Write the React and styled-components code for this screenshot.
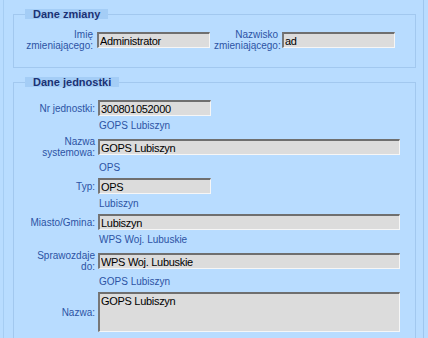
import React from "react";
import styled, { createGlobalStyle } from "styled-components";

const GlobalStyle = createGlobalStyle`
  html, body {
    margin: 0;
    padding: 0;
    background: #b8dcff;
    font-family: "Liberation Sans", Arial, sans-serif;
  }
`;

const Page = styled.div`
  box-sizing: border-box;
  margin-left: 3px;
  width: 421px;
  min-height: 338px;
  border-left: 1px solid #a6cdf3;
  border-right: 1px solid #9fc6ee;
  padding: 9px 7px 0 9px;
  display: flex;
  flex-direction: column;
  gap: 9px;
`;

const Fieldset = styled.fieldset`
  margin: 0;
  padding: ${(p) => p.$pad};
  border: 1px solid #a2c8ef;
  min-width: 0;
`;

const Legend = styled.legend`
  margin-left: 11px;
  padding: 0 8px;
  height: 10px;
  line-height: 10px;
  background: #a4cdf6;
  color: #1b3274;
  font-weight: bold;
  font-size: 11px;
  white-space: nowrap;
`;

const PairRow = styled.div`
  display: flex;
  align-items: center;
  height: 22px;
`;

const Row = styled.div`
  display: flex;
  align-items: center;
  min-height: ${(p) => (p.$tall ? "22px" : "16px")};
`;

const Label = styled.label`
  box-sizing: border-box;
  width: ${(p) => p.$w}px;
  margin-right: ${(p) => p.$gap}px;
  flex: none;
  text-align: right;
  color: #2c53a4;
  font-size: 10px;
  line-height: 11px;
`;

const Input = styled.input`
  box-sizing: border-box;
  flex: none;
  width: ${(p) => p.$w}px;
  height: 16px;
  margin: 0 ${(p) => p.$after || 0}px 0 0;
  padding: 0 1px;
  background: #dcdcdc;
  border-top: 2px solid #6f6f6f;
  border-left: 2px solid #777;
  border-right: 1px solid #f6f6f6;
  border-bottom: 1px solid #f6f6f6;
  font-family: "Liberation Sans", Arial, sans-serif;
  font-size: 11px;
  letter-spacing: -0.3px;
  line-height: 13px;
  color: #000;
  outline: none;
`;

const Area = styled.textarea`
  box-sizing: border-box;
  flex: none;
  width: 302px;
  height: 40px;
  margin: 0;
  padding: 1px 1px;
  resize: none;
  overflow: hidden;
  background: #dcdcdc;
  border-top: 2px solid #6f6f6f;
  border-left: 2px solid #777;
  border-right: 1px solid #f6f6f6;
  border-bottom: 1px solid #f6f6f6;
  font-family: "Liberation Sans", Arial, sans-serif;
  font-size: 11px;
  letter-spacing: -0.3px;
  line-height: 13px;
  color: #000;
  outline: none;
`;

const Desc = styled.div`
  height: 20px;
  line-height: 20px;
  padding-left: 85px;
  color: #2c53a4;
  font-size: 10px;
`;

const units = [
  { label: "Nr jednostki:", value: "300801052000", w: 113, desc: "GOPS Lubiszyn" },
  { label: ["Nazwa", "systemowa:"], value: "GOPS Lubiszyn", w: 302, desc: "OPS" },
  { label: "Typ:", value: "OPS", w: 113, desc: "Lubiszyn" },
  { label: "Miasto/Gmina:", value: "Lubiszyn", w: 302, desc: "WPS Woj. Lubuskie" },
  { label: ["Sprawozdaje", "do:"], value: "WPS Woj. Lubuskie", w: 302, desc: "GOPS Lubiszyn" },
];

function LabelText({ text }) {
  if (Array.isArray(text)) {
    return (
      <>
        {text[0]}
        <br />
        {text[1]}
      </>
    );
  }
  return text;
}

export default function App() {
  return (
    <>
      <GlobalStyle />
      <Page>
        <Fieldset $pad="10px 0 16px 0">
          <Legend>Dane zmiany</Legend>
          <PairRow>
            <Label $w={79} $gap={4}>
              Imię
              <br />
              zmieniającego:
            </Label>
            <Input $w={113} $after={4} readOnly value="Administrator" />
            <Label $w={64} $gap={4}>
              Nazwisko
              <br />
              zmieniającego:
            </Label>
            <Input $w={113} readOnly value="ad" />
          </PairRow>
        </Fieldset>
        <Fieldset $pad="13px 0 10px 0">
          <Legend>Dane jednostki</Legend>
          {units.map((u) => (
            <React.Fragment key={u.value + u.w}>
              <Row $tall={Array.isArray(u.label)}>
                <Label $w={81} $gap={3}>
                  <LabelText text={u.label} />
                </Label>
                <Input $w={u.w} readOnly value={u.value} />
              </Row>
              <Desc>{u.desc}</Desc>
            </React.Fragment>
          ))}
          <Row $tall>
            <Label $w={81} $gap={3}>Nazwa:</Label>
            <Area readOnly value="GOPS Lubiszyn" />
          </Row>
        </Fieldset>
      </Page>
    </>
  );
}
